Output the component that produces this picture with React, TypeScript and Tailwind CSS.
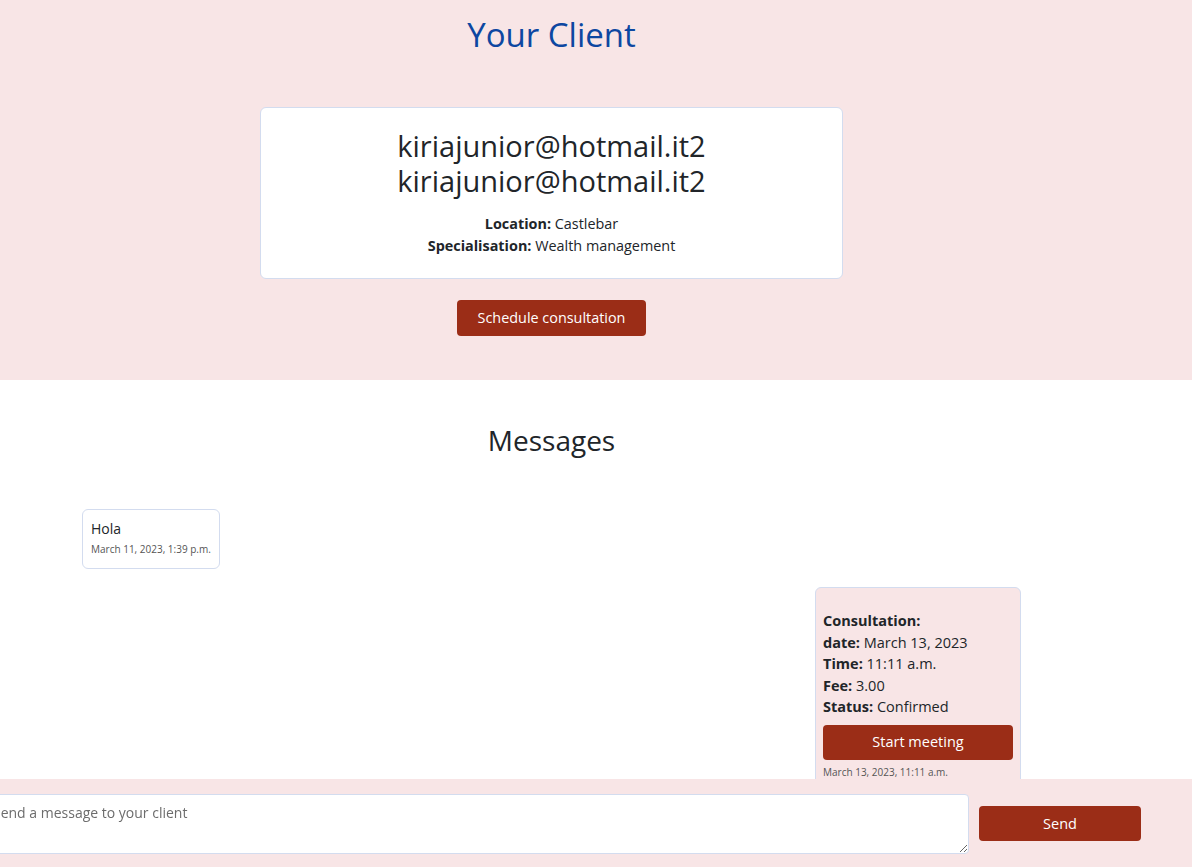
import React from "react";

export default function App() {
  return (
    <div
      className="min-h-[867px] bg-white text-[#212529] overflow-hidden relative"
      style={{ fontFamily: '"Open Sans", sans-serif' }}
    >
      {/* Client header */}
      <section className="bg-[#f8e5e6] h-[380px] pr-[89px]">
        <div className="flex flex-col items-center">
          <h1 className="text-[33px] leading-[44px] text-[#0d47a1] mt-[13px]">Your Client</h1>
          <div className="mt-[50px] w-[583px] h-[172px] bg-white border border-[#d3dcef] rounded-md flex flex-col items-center pt-[20px]">
            <div className="text-[29px] leading-[35px] text-center">
              kiriajunior@hotmail.it2
              <br />
              kiriajunior@hotmail.it2
            </div>
            <div className="mt-[15px] text-[14.4px] leading-[22px] text-center">
              <div>
                <span className="font-bold">Location:</span> Castlebar
              </div>
              <div>
                <span className="font-bold">Specialisation:</span> Wealth management
              </div>
            </div>
          </div>
          <button className="mt-[21px] w-[189px] h-[36px] bg-[#9b2d17] text-white text-[14.4px] rounded-[4px]">
            Schedule consultation
          </button>
        </div>
      </section>

      {/* Messages */}
      <section className="pr-[89px] pb-[40px]">
        <h2 className="text-center text-[28px] leading-[36px] mt-[42px]">Messages</h2>
        <div className="mt-[51px] pl-[82px]">
          <div className="w-[138px] h-[60px] border border-[#d3dcef] rounded-md px-[8px] pt-[8px]">
            <div className="text-[14px] leading-[22px]">Hola</div>
            <div className="text-[10px] leading-[14px] text-[#555] mt-[2px]">March 11, 2023, 1:39 p.m.</div>
          </div>
        </div>
        <div className="mt-[18px] flex justify-end pr-[82px]">
          <div className="w-[206px] bg-[#f8e5e6] border border-[#d3dcef] rounded-md px-[7px] pt-[22px] pb-[10px]">
            <div className="text-[14.5px] leading-[21.5px]">
              <div className="font-bold">Consultation:</div>
              <div>
                <span className="font-bold">date:</span> March 13, 2023
              </div>
              <div>
                <span className="font-bold">Time:</span> 11:11 a.m.
              </div>
              <div>
                <span className="font-bold">Fee:</span> 3.00
              </div>
              <div>
                <span className="font-bold">Status:</span> Confirmed
              </div>
            </div>
            <button className="mt-[7px] w-full h-[35px] bg-[#9b2d17] text-white text-[14.5px] rounded-[4px]">
              Start meeting
            </button>
            <div className="text-[10px] leading-[14px] text-[#555] mt-[5px]">March 13, 2023, 11:11 a.m.</div>
          </div>
        </div>
      </section>

      {/* Message form */}
      <div className="fixed left-0 right-0 bottom-0 h-[88px] bg-[#f8e5e6] flex items-center">
        <textarea
          placeholder="Send a message to your client"
          className="ml-[-20px] w-[989px] h-[60px] mt-[1px] bg-white border border-[#d3dcef] rounded-[4px] px-[12px] pt-[7px] pb-[5px] text-[14px] leading-[22px] placeholder:text-[#6c6c6c] outline-none"
        />
        <button className="ml-[10px] w-[162px] h-[35px] mt-[1px] bg-[#9b2d17] text-white text-[14.5px] rounded-[4px]">
          Send
        </button>
      </div>
    </div>
  );
}
